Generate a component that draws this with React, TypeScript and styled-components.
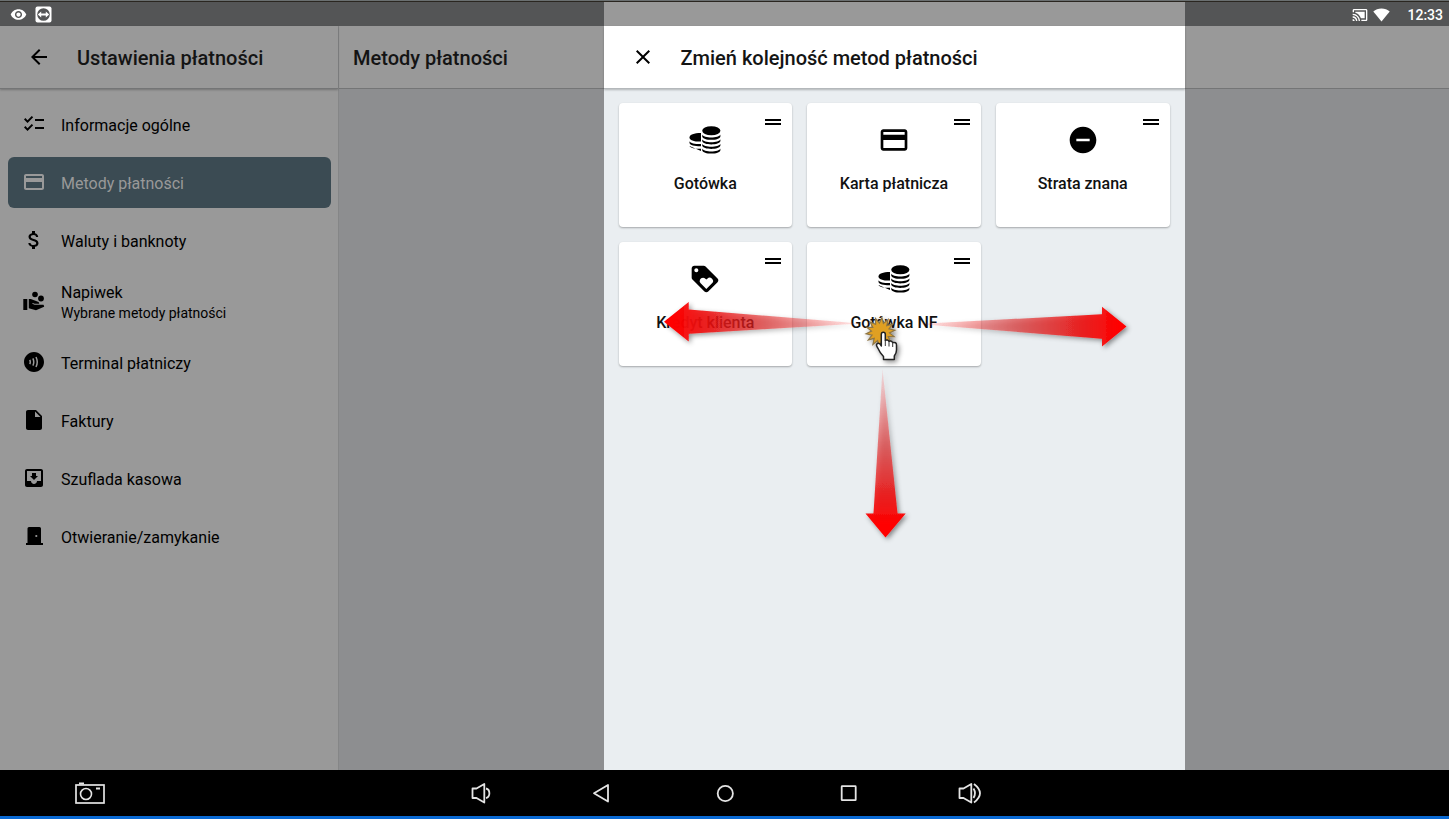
import React from "react";
import styled, { createGlobalStyle, css } from "styled-components";
import {
  MdArrowBack,
  MdAttachMoney,
  MdCastConnected,
  MdChecklist,
  MdClose,
  MdContactless,
  MdDragHandle,
  MdInsertDriveFile,
  MdLoyalty,
  MdMoveToInbox,
  MdOutlineCreditCard,
  MdRemoveCircle,
  MdVisibility,
} from "react-icons/md";

const GlobalStyle = createGlobalStyle`
  *, *::before, *::after { box-sizing: border-box; }
  body {
    margin: 0;
    font-family: Roboto, "Noto Sans", sans-serif;
    color: #000;
    background: #000;
  }
  button {
    border: 0;
    padding: 0;
    background: none;
    font: inherit;
    color: inherit;
    cursor: pointer;
  }
  svg { display: block; }
`;

const Screen = styled.div`
  position: relative;
  display: flex;
  flex-direction: column;
  min-height: 100vh;
`;

const StatusBar = styled.header`
  display: flex;
  align-items: center;
  justify-content: space-between;
  height: 26px;
  padding: 2px 6px 0 10px;
  border-top: 1px solid #6a6f70;
  background: #545556;
  box-shadow: inset 0 1px 0 #2a2620;
  color: #fff;
`;

const StatusGroup = styled.div<{ $tight?: boolean }>`
  display: flex;
  align-items: center;
  gap: ${(p) => (p.$tight ? 5 : 8)}px;
`;

const Clock = styled.time`
  margin-left: 12px;
  font-size: 14px;
  line-height: 20px;
  font-weight: 500;
`;

const Body = styled.div`
  display: flex;
  flex: 1;
`;

const Sidebar = styled.aside`
  display: flex;
  flex-direction: column;
  flex: 0 0 339px;
  border-right: 1px solid #858687;
  background: #999;
`;

const Content = styled.main`
  flex: 1;
  background: #8d8e90;
`;

const HeaderBar = styled.div<{ $lit?: boolean; $raised?: boolean }>`
  display: flex;
  align-items: center;
  height: 63px;
  border-bottom: 1px solid ${(p) => (p.$lit ? "#b4b8bb" : "#747576")};
  background: ${(p) => (p.$lit ? "#fff" : "#999")};
  ${(p) =>
    p.$raised &&
    css`
      position: relative;
      z-index: 1;
      box-shadow: 0 1px 2px rgba(0, 0, 0, 0.25);
    `}
`;

const IconButton = styled.button`
  display: grid;
  place-items: center;
  width: 24px;
  height: 24px;
  margin: 0 26px 0 27px;
`;

const Title = styled.h1<{ $inset?: boolean }>`
  margin: 0;
  padding: 2px 0 0 ${(p) => (p.$inset ? 14 : 0)}px;
  font-size: 20px;
  line-height: 28px;
  font-weight: 500;
  color: #141414;
`;

const Menu = styled.nav`
  display: flex;
  flex-direction: column;
  gap: 7px;
  padding: 10px 7px 10px 8px;
`;

const MenuItem = styled.a<{ $active?: boolean }>`
  display: flex;
  align-items: center;
  gap: 15px;
  min-height: 51px;
  padding: 5px 14px 7px;
  border-radius: 6px;
  text-decoration: none;
  font-size: 16px;
  line-height: 22px;
  color: ${(p) => (p.$active ? "#999" : "#000")};
  background: ${(p) => (p.$active ? "#3b4b53" : "transparent")};
`;

const MenuText = styled.span`
  display: flex;
  flex-direction: column;
  padding-top: 4px;
`;

const MenuNote = styled.small`
  font-size: 14px;
  line-height: 19px;
`;

const DialogLayer = styled.div`
  position: absolute;
  inset: 2px 0 49px 339px;
  display: flex;
  justify-content: center;
`;

const Dialog = styled.section`
  display: flex;
  flex-direction: column;
  flex: 0 1 581px;
  padding-top: 24px;
  background: #999;
`;

const DialogBody = styled.div`
  position: relative;
  flex: 1;
  padding: 14px 15px;
  background: #eaeef1;
`;

const CardGrid = styled.div`
  display: grid;
  grid-template-columns: repeat(3, 1fr);
  gap: 15px;
`;

const Card = styled.article`
  position: relative;
  display: flex;
  flex-direction: column;
  align-items: center;
  gap: 18px;
  height: 124px;
  padding-top: 21px;
  border-radius: 4px;
  background: #fff;
  box-shadow: 0 1px 2px rgba(0, 0, 0, 0.3);
`;

const CardLabel = styled.h2`
  margin: 0;
  font-size: 16px;
  line-height: 20px;
  font-weight: 500;
  color: #111;
`;

const DragButton = styled.button`
  position: absolute;
  top: 7px;
  right: 7px;
  cursor: grab;
`;

const Gestures = styled.svg`
  position: absolute;
  top: 0;
  left: 0;
  pointer-events: none;
`;

const NavBar = styled.footer`
  display: grid;
  grid-template-columns: 1fr auto 1fr;
  align-items: center;
  height: 49px;
  border-bottom: 3px solid #0a6ad4;
  background: #000;
  color: #e4e4e4;
`;

const NavGroup = styled.div`
  display: flex;
`;

const NavButton = styled.button<{ $edge?: boolean }>`
  display: grid;
  place-items: center;
  width: ${(p) => (p.$edge ? "32px" : "123px")};
  height: 46px;
  margin-left: ${(p) => (p.$edge ? "74px" : "0")};
`;

const RemoteIcon = () => (
  <svg width="17" height="17" viewBox="0 0 17 17">
    <rect x="0.5" y="0.5" width="16" height="16" rx="2" fill="#fff" />
    <circle cx="8.500" cy="8.500" r="6.300" fill="#545556" />
    <path d="M2.800 8.500 6.200 5.600V7.500H10.800V5.600L14.200 8.500 10.800 11.400V9.500H6.200V11.400Z" fill="#fff" />
  </svg>
);

const WifiIcon = () => (
  <svg width="17" height="14" viewBox="0 0 17 14" fill="currentColor">
    <path d="M8.500 13.500 0.300 3.500C2.500 1.500 5.300.5 8.500.5S14.500 1.500 16.700 3.500Z" />
  </svg>
);

const TipIcon = () => (
  <svg width="24" height="24" viewBox="0 0 24 24" fill="currentColor">
    <path d="M1.300 10H5.300V21H1.300Z" />
    <path d="M6.800 10H8.800L16 12.700C16.800 13 17.200 13.700 17.200 14.700H12.700L10.600 13.900 10.300 14.800 12.600 15.700H21C21.500 15.700 22.100 16.400 22.100 17.200V17.800L14 21.200 6.800 19.200Z" />
    <circle cx="13" cy="5.500" r="2.800" />
    <circle cx="19" cy="9.500" r="2.900" />
  </svg>
);

const DoorIcon = () => (
  <svg width="24" height="24" viewBox="0 0 24 24" fill="currentColor">
    <path
      fillRule="evenodd"
      d="M7 3H17.500Q19 3 19 4.500V19H21V21H4V19H5.500V4.500Q5.500 3 7 3ZM14.300 10.900a1.100 1.100 0 1 0 0 2.200 1.100 1.100 0 0 0 0-2.200Z"
    />
  </svg>
);

/* Lower rims of the coins, given by the y of each rim's lowest point. */
const rightRims = [15.8, 20.4, 25, 29.6];
const leftRims = [22, 26.8];

const CoinsIcon = () => (
  <svg width="32" height="32" viewBox="0 0 32 32" fill="#000">
    <ellipse cx="22.300" cy="6.700" rx="9.100" ry="4.500" />
    {rightRims.map((b) => (
      <path
        key={b}
        d={`M13.200 ${b - 5.2}C14.400 ${b - 1.2} 30.200 ${b - 1.2} 31.400 ${b - 5.2}V${b - 3.4}C30.800 ${b + 1.1} 13.800 ${b + 1.1} 13.200 ${b - 3.4}Z`}
      />
    ))}
    <path d="M12 9V17.600C4.800 17.700.5 16.200.5 13.400S5 9 12 9Z" />
    {leftRims.map((b) => (
      <path key={b} d={`M.5 ${b - 4.8}C1.500 ${b - 2.6} 6.500 ${b - 1.9} 12 ${b - 2}V${b + 0.2}C6 ${b + 0.3} 1 ${b - 0.8}.5 ${b - 3}Z`} />
    ))}
  </svg>
);

const CameraIcon = () => (
  <svg width="32" height="24" viewBox="0 0 32 24" fill="none" stroke="currentColor">
    <rect x="2" y="4" width="28" height="18" strokeWidth="1.700" />
    <path d="M5 2.500H10M22 7.500H26" strokeWidth="2" />
    <circle cx="12" cy="13" r="5.500" strokeWidth="1.600" />
  </svg>
);

const VolumeIcon = ({ loud }: { loud?: boolean }) => (
  <svg
    width="26"
    height="24"
    viewBox={loud ? "0 0 26 24" : "-5 0 26 24"}
    fill="none"
    stroke="currentColor"
    strokeWidth="1.800"
    strokeLinejoin="round"
  >
    <path d="M1.500 7.500H5.500L13.300 3V21.500L5.500 17H1.500Z" />
    {loud ? (
      <path d="M15.500 7.500Q18.500 12.300 15.500 17M16 3Q28 12.300 16 21.500" />
    ) : (
      <path d="M15 7.500C19.500 8.500 19.500 16 15 17" />
    )}
  </svg>
);

const BackIcon = () => (
  <svg width="20" height="20" viewBox="0 0 20 20" fill="none" stroke="currentColor" strokeWidth="1.800">
    <path d="M16 2V18.600L2 10.300Z" strokeLinejoin="round" />
  </svg>
);

const HomeIcon = () => (
  <svg width="20" height="20" viewBox="0 0 20 20" fill="none" stroke="currentColor" strokeWidth="1.800">
    <circle cx="10.300" cy="10.500" r="7.600" />
  </svg>
);

const RecentIcon = () => (
  <svg width="20" height="20" viewBox="0 0 20 20" fill="none" stroke="currentColor" strokeWidth="1.800">
    <rect x="3.700" y="3.200" width="14" height="14" rx="0.5" />
  </svg>
);

const burst = Array.from({ length: 28 }, (_, i) => {
  const angle = (i * Math.PI) / 14 + 0.1;
  const radius = i % 2 ? 9 : 14.5;
  return `${(276.5 + radius * Math.sin(angle)).toFixed(1)},${(243 - radius * Math.cos(angle)).toFixed(1)}`;
}).join(" ");

const fadeStops = (
  <>
    <stop offset="0" stopColor="#f33" stopOpacity="0.1" />
    <stop offset="0.5" stopColor="#e02020" stopOpacity="0.58" />
    <stop offset="0.85" stopColor="#f01010" stopOpacity="0.9" />
    <stop offset="1" stopColor="#f00" />
  </>
);

const DragGestures = () => (
  <Gestures width="581" height="480" viewBox="0 0 581 480" aria-hidden="true">
    <defs>
      <linearGradient id="toLeft" gradientUnits="userSpaceOnUse" x1="256" y1="0" x2="68" y2="0">
        {fadeStops}
      </linearGradient>
      <linearGradient id="toRight" gradientUnits="userSpaceOnUse" x1="314" y1="0" x2="515" y2="0">
        {fadeStops}
      </linearGradient>
      <linearGradient id="toBottom" gradientUnits="userSpaceOnUse" x1="0" y1="280" x2="0" y2="435">
        {fadeStops}
      </linearGradient>
      <filter id="soft" filterUnits="userSpaceOnUse" x="0" y="180" width="581" height="300">
        <feDropShadow dx="2" dy="2" stdDeviation="2.500" floodColor="#000" floodOpacity="0.45" />
      </filter>
    </defs>
    <g filter="url(#soft)">
      <path d="M256 234.500 84.700 220.500V213L60 232.700 84.700 252.500V244.700Z" fill="url(#toLeft)" />
      <path d="M314 235 498 225.300V217.700L522.500 237.500 498 257.500V249.700Z" fill="url(#toRight)" />
      <path d="M278.500 280 269.500 424.500H261.500L281.500 448.500 301.700 424.500H293.500Z" fill="url(#toBottom)" />
    </g>
    <g filter="url(#soft)">
      <polygon points={burst} fill="#e0a024" stroke="#8d7544" strokeWidth="1.200" />
      <path
        d="M277.300 245.500Q277.300 243.300 279.300 243.300T281.300 245.500V251.500Q283.500 250 285 252.300 287.500 251.200 288.700 253.600 292.500 252.700 292.500 256V261Q292.500 264 290.300 267V270.500H279.500V267.500Q276 264 273.500 258.500 271.500 255.500 273.500 254.500T277.300 257Z"
        fill="#fff"
        stroke="#222"
        strokeWidth="1.500"
        strokeLinejoin="round"
      />
      <path d="M281.300 251.500V257M285 252.500V257.500M288.700 253.600V258" stroke="#333" strokeWidth="1" />
    </g>
  </Gestures>
);

const menu = [
  { label: "Informacje ogólne", icon: <MdChecklist size={24} /> },
  { label: "Metody płatności", icon: <MdOutlineCreditCard size={24} />, active: true },
  { label: "Waluty i banknoty", icon: <MdAttachMoney size={24} /> },
  { label: "Napiwek", note: "Wybrane metody płatności", icon: <TipIcon /> },
  { label: "Terminal płatniczy", icon: <MdContactless size={24} /> },
  { label: "Faktury", icon: <MdInsertDriveFile size={24} /> },
  { label: "Szuflada kasowa", icon: <MdMoveToInbox size={24} /> },
  { label: "Otwieranie/zamykanie", icon: <DoorIcon /> },
];

const methods = [
  { label: "Gotówka", icon: <CoinsIcon /> },
  { label: "Karta płatnicza", icon: <MdOutlineCreditCard size={32} /> },
  { label: "Strata znana", icon: <MdRemoveCircle size={32} /> },
  { label: "Kredyt klienta", icon: <MdLoyalty size={32} /> },
  { label: "Gotówka NF", icon: <CoinsIcon /> },
];

export default function App() {
  return (
    <>
      <GlobalStyle />
      <Screen>
        <StatusBar>
          <StatusGroup>
            <MdVisibility size={17} />
            <RemoteIcon />
          </StatusGroup>
          <StatusGroup $tight>
            <MdCastConnected size={16} />
            <WifiIcon />
            <Clock>12:33</Clock>
          </StatusGroup>
        </StatusBar>
        <Body>
          <Sidebar>
            <HeaderBar $raised>
              <IconButton aria-label="Wstecz">
                <MdArrowBack size={24} />
              </IconButton>
              <Title>Ustawienia płatności</Title>
            </HeaderBar>
            <Menu>
              {menu.map((item) => (
                <MenuItem key={item.label} href="#" $active={item.active}>
                  {item.icon}
                  <MenuText>
                    {item.label}
                    {item.note && <MenuNote>{item.note}</MenuNote>}
                  </MenuText>
                </MenuItem>
              ))}
            </Menu>
          </Sidebar>
          <Content>
            <HeaderBar>
              <Title $inset>Metody płatności</Title>
            </HeaderBar>
          </Content>
        </Body>
        <DialogLayer>
          <Dialog role="dialog" aria-labelledby="dialog-title">
            <HeaderBar $lit $raised>
              <IconButton aria-label="Zamknij">
                <MdClose size={24} />
              </IconButton>
              <Title id="dialog-title">Zmień kolejność metod płatności</Title>
            </HeaderBar>
            <DialogBody>
              <CardGrid>
                {methods.map((method) => (
                  <Card key={method.label}>
                    {method.icon}
                    <CardLabel>{method.label}</CardLabel>
                    <DragButton aria-label={`Przesuń: ${method.label}`}>
                      <MdDragHandle size={24} />
                    </DragButton>
                  </Card>
                ))}
              </CardGrid>
              <DragGestures />
            </DialogBody>
          </Dialog>
        </DialogLayer>
        <NavBar>
          <NavGroup>
            <NavButton $edge aria-label="Zrzut ekranu">
              <CameraIcon />
            </NavButton>
          </NavGroup>
          <NavGroup>
            <NavButton aria-label="Ciszej">
              <VolumeIcon />
            </NavButton>
            <NavButton aria-label="Wstecz">
              <BackIcon />
            </NavButton>
            <NavButton aria-label="Ekran główny">
              <HomeIcon />
            </NavButton>
            <NavButton aria-label="Ostatnie aplikacje">
              <RecentIcon />
            </NavButton>
            <NavButton aria-label="Głośniej">
              <VolumeIcon loud />
            </NavButton>
          </NavGroup>
        </NavBar>
      </Screen>
    </>
  );
}
